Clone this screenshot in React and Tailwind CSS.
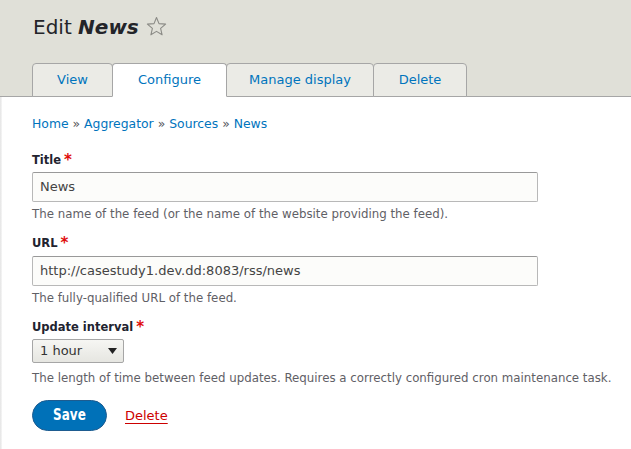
import React from "react";

const font = { fontFamily: '"DejaVu Sans", Verdana, sans-serif' };

function Req() {
  return <span className="relative top-[1px] leading-none text-[#e00c0c] ml-[3px] text-[15px] font-bold">*</span>;
}

export default function App() {
  const tabs = [
    { label: "View", w: "w-[81px]" },
    { label: "Configure", w: "w-[115px]", active: true },
    { label: "Manage display", w: "w-[148px]" },
    { label: "Delete", w: "w-[94px]" },
  ];
  return (
    <div className="w-[631px] h-[449px] overflow-hidden bg-white text-[#222330] flex flex-col" style={font}>
      <div className="bg-[#e0e0d8] border-b border-[#a6a6a6] pl-[32px]">
        <div className="h-[63px] flex items-center pb-[12px] pt-[2px]">
          <h1 className="text-[20px] leading-[26px] text-[#232429] pl-[1px]">
            Edit <em className="font-bold italic">News</em>
          </h1>
          <svg className="ml-[7px] mt-[-1px]" width="21" height="20" viewBox="0 0 21 20">
            <polygon
              points="10.5,1.5 13,7.6 19.6,8.1 14.6,12.4 16.1,18.8 10.5,15.4 4.9,18.8 6.4,12.4 1.4,8.1 8,7.6"
              fill="none"
              stroke="#8b8b86"
              strokeWidth="1.1"
              strokeLinejoin="round"
            />
          </svg>
        </div>
        <div className="flex -mb-px">
          {tabs.map((t, i) => (
            <div
              key={t.label}
              className={
                "h-[34px] flex items-center justify-center text-[13px] text-[#0074bd] border border-[#a6a6a6] rounded-t-[4px] " +
                t.w +
                (i > 0 ? " -ml-px" : "") +
                (t.active ? " bg-white border-b-white relative z-10" : " bg-[#ebebe6]")
              }
            >
              {t.label}
            </div>
          ))}
        </div>
      </div>
      <div className="flex flex-1">
        <div className="w-[2px] bg-gradient-to-r from-[#e4e4e4] to-[#f6f6f6] self-stretch" />
        <div className="pl-[30px] pt-[18px] flex-1">
          <div className="text-[12.4px] leading-[18px] text-[#0074bd]">
            Home <span className="text-[#55565a]">»</span> Aggregator <span className="text-[#55565a]">»</span> Sources{" "}
            <span className="text-[#55565a]">»</span> News
          </div>

          <div className="mt-[18px] text-[11.5px] leading-[18px] font-bold">
            Title<Req />
          </div>
          <div className="mt-[3px] w-[506px] h-[30px] border border-[#b8b8b8] border-t-[#999] bg-[#fcfcfa] rounded-[2px] flex items-center pl-[7px] text-[13px] text-[#444]">
            News
          </div>
          <div className="mt-[4px] text-[11.8px] leading-[16px] text-[#5f6066]">
            The name of the feed (or the name of the website providing the feed).
          </div>

          <div className="mt-[12px] text-[11.5px] leading-[18px] font-bold">
            URL<Req />
          </div>
          <div className="mt-[4px] w-[506px] h-[30px] border border-[#b8b8b8] border-t-[#999] bg-[#fcfcfa] rounded-[2px] flex items-center pl-[7px] text-[13px] text-[#444]">
            http://casestudy1.dev.dd:8083/rss/news
          </div>
          <div className="mt-[4px] text-[11.8px] leading-[16px] text-[#5f6066]">
            The fully-qualified URL of the feed.
          </div>

          <div className="mt-[12px] text-[11.5px] leading-[18px] font-bold">
            Update interval<Req />
          </div>
          <div className="mt-[3px] w-[92px] h-[24px] border border-[#a6a6a6] rounded-[2px] bg-gradient-to-b from-[#f6f6f3] to-[#e6e6e1] flex items-center justify-between pl-[7px] pr-[6px] text-[13px] text-[#333]">
            <span>1 hour</span>
            <svg width="9" height="6" viewBox="0 0 9 6">
              <polygon points="0,0 9,0 4.5,6" fill="#222" />
            </svg>
          </div>
          <div className="mt-[7px] text-[11.8px] leading-[16px] text-[#5f6066]">
            The length of time between feed updates. Requires a correctly configured cron maintenance task.
          </div>

          <div className="mt-[14px] flex items-center">
            <div className="w-[75px] h-[31px] rounded-full bg-[#0071b8] border border-[#1e5c90] flex items-center justify-center text-white font-bold text-[15px]">
              <span className="inline-block scale-x-[0.8]">Save</span>
            </div>
            <span className="ml-[18px] text-[13px] text-[#c00] underline underline-offset-[3px]">Delete</span>
          </div>
        </div>
      </div>
    </div>
  );
}
